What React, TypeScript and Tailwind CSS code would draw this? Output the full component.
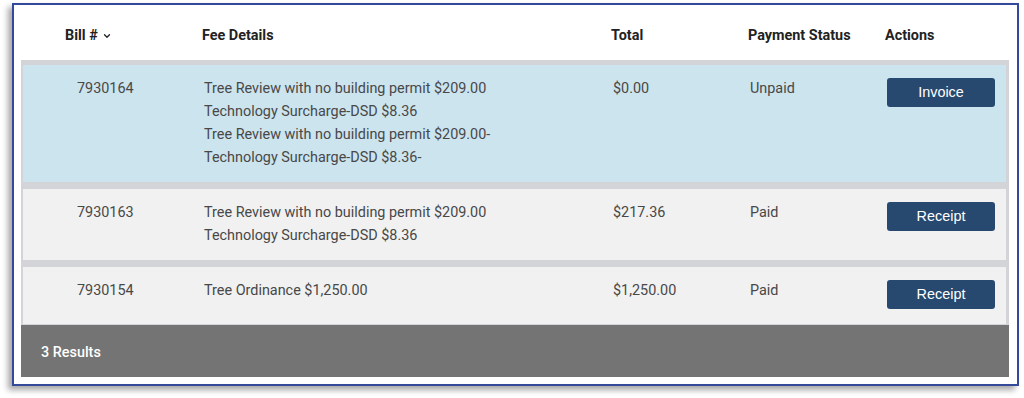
import { ChevronDown } from "lucide-react";

interface Bill {
  id: string;
  fees: string[];
  total: string;
  status: string;
  action: string;
  highlight?: boolean;
}

const bills: Bill[] = [
  {
    id: "7930164",
    fees: [
      "Tree Review with no building permit $209.00",
      "Technology Surcharge-DSD $8.36",
      "Tree Review with no building permit $209.00-",
      "Technology Surcharge-DSD $8.36-",
    ],
    total: "$0.00",
    status: "Unpaid",
    action: "Invoice",
    highlight: true,
  },
  {
    id: "7930163",
    fees: ["Tree Review with no building permit $209.00", "Technology Surcharge-DSD $8.36"],
    total: "$217.36",
    status: "Paid",
    action: "Receipt",
  },
  {
    id: "7930154",
    fees: ["Tree Ordinance $1,250.00"],
    total: "$1,250.00",
    status: "Paid",
    action: "Receipt",
  },
];

const cols = "grid grid-cols-[181px_409px_137px_137px_1fr]";

export default function App() {
  return (
    <div className="h-[398px] w-[1024px] bg-white pl-[12px] pt-[3px] font-['Roboto',sans-serif]">
      <div className="h-[383px] w-[1007px] border-2 border-[#34499a] bg-white pb-[8px] pl-[7px] pr-[8px] shadow-[-4px_4px_6px_rgba(0,0,0,0.35)]">
        <div className={`${cols} h-[55px] items-center pt-[6px] text-[14.4px] font-bold text-[#222]`}>
          <div className="flex items-center gap-[4px] pl-[44px]">
            Bill #
            <ChevronDown size={10} strokeWidth={3} className="mt-[2px]" />
          </div>
          <div>Fee Details</div>
          <div>Total</div>
          <div>Payment Status</div>
          <div>Actions</div>
        </div>

        <div className="flex flex-col gap-[7px] bg-[#d2d4d7] pb-[1px] pl-[2px] pr-[3px] pt-[5px]">
          {bills.map((bill) => (
            <div
              key={bill.id}
              className={`${cols} min-h-[57px] pb-[13px] pt-3 text-[14.4px] leading-[23px] text-[#484848] ${
                bill.highlight ? "bg-[#cce4ee]" : "bg-[#f1f1f1]"
              }`}
            >
              <div className="pl-[54px]">{bill.id}</div>
              <div>
                {bill.fees.map((fee, i) => (
                  <div key={i}>{fee}</div>
                ))}
              </div>
              <div>{bill.total}</div>
              <div>{bill.status}</div>
              <div>
                <button
                  type="button"
                  className="mt-[1px] h-[29px] w-[108px] rounded-[3px] bg-[#27496f] font-['Liberation_Sans',sans-serif] text-[14.4px] text-white"
                >
                  {bill.action}
                </button>
              </div>
            </div>
          ))}
        </div>

        <div className="flex h-[52px] items-center bg-[#747474] pl-[20px] pt-[3px] text-[14.4px] font-medium text-white">
          3 Results
        </div>
      </div>
    </div>
  );
}
